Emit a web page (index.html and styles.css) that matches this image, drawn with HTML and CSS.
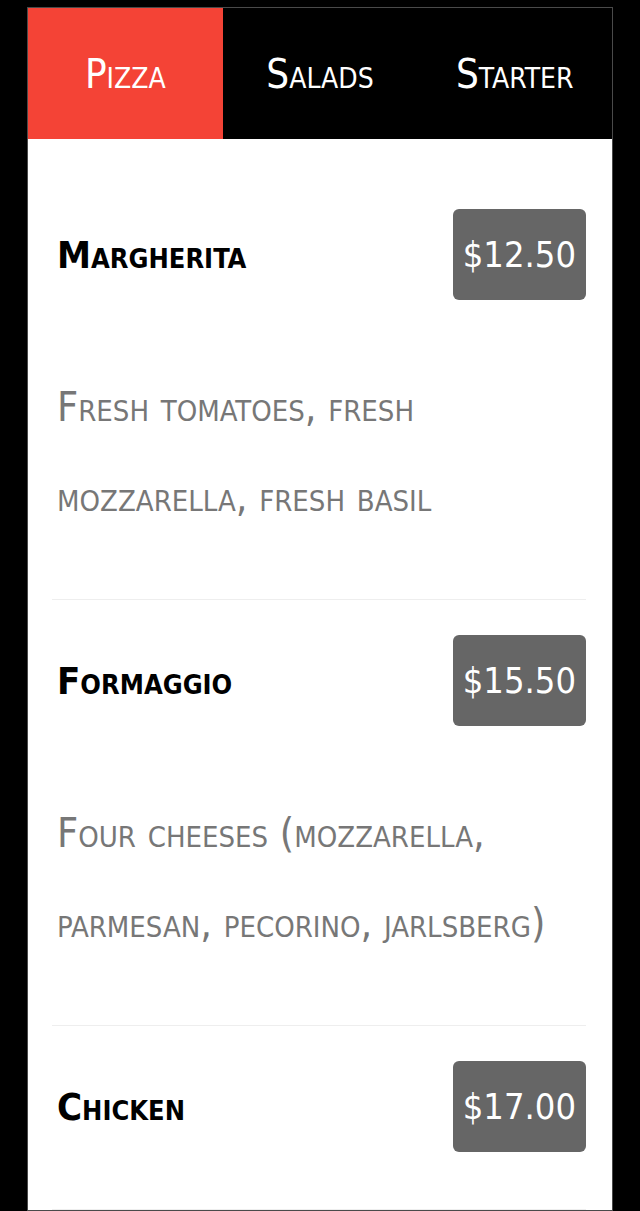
FILE: index.html
```html
<!DOCTYPE html>
<html lang="en">
<head>
    <meta charset="UTF-8">
    <meta name="viewport" content="width=device-width, initial-scale=1.0">
    <title>Menu</title>
    <link rel="stylesheet" href="styles.css">
</head>
<body>
    <div class="menu">
        <nav class="tabs">
            <a href="#" class="tab active">Pizza</a>
            <a href="#" class="tab">Salads</a>
            <a href="#" class="tab">Starter</a>
        </nav>

        <div class="items">
            <div class="item">
                <div class="item-head">
                    <h2 class="item-name">Margherita</h2>
                    <span class="price">$12.50</span>
                </div>
                <p class="item-desc">Fresh tomatoes, fresh mozzarella, fresh basil</p>
            </div>

            <div class="item">
                <div class="item-head">
                    <h2 class="item-name">Formaggio</h2>
                    <span class="price">$15.50</span>
                </div>
                <p class="item-desc">Four cheeses (mozzarella, parmesan, pecorino, jarlsberg)</p>
            </div>

            <div class="item">
                <div class="item-head">
                    <h2 class="item-name">Chicken</h2>
                    <span class="price">$17.00</span>
                </div>
            </div>
        </div>
    </div>
</body>
</html>
```

FILE: styles.css
```css
body {
    margin: 0;
    background-color: #000;
    font-family: "DejaVu Sans Condensed", "Liberation Sans Narrow", sans-serif;
}
.menu {
    box-sizing: border-box;
    width: 586px;
    margin: 7px 0 0 27px;
    border: 1px solid #4a4a4a;
}
.tabs {
    display: grid;
    grid-template-columns: repeat(3, 1fr);
    height: 131px;
    background-color: #000;
}
.tab {
    display: flex;
    align-items: center;
    justify-content: center;
    color: #fff;
    text-decoration: none;
    font-size: 40px;
    font-variant: small-caps;
}
.tab.active {
    background-color: #f44336;
}
.items {
    background-color: #fff;
    padding: 35px 26px 0 24px;
}
.item {
    padding: 35px 0 57px;
    border-bottom: 1px solid #eee;
}
.item-head {
    display: flex;
    justify-content: space-between;
    align-items: center;
    height: 91px;
}
.item-name {
    margin: 0;
    padding-left: 5px;
    font-size: 38px;
    font-weight: 700;
    font-variant: small-caps;
    color: #000;
}
.price {
    height: 91px;
    line-height: 91px;
    padding: 0 10px;
    border-radius: 6px;
    background-color: #666;
    color: #fff;
    font-size: 36px;
}
.item-desc {
    margin: 62px 0 0;
    padding-left: 5px;
    font-size: 41px;
    line-height: 90px;
    font-variant: small-caps;
    color: #777;
}
```
